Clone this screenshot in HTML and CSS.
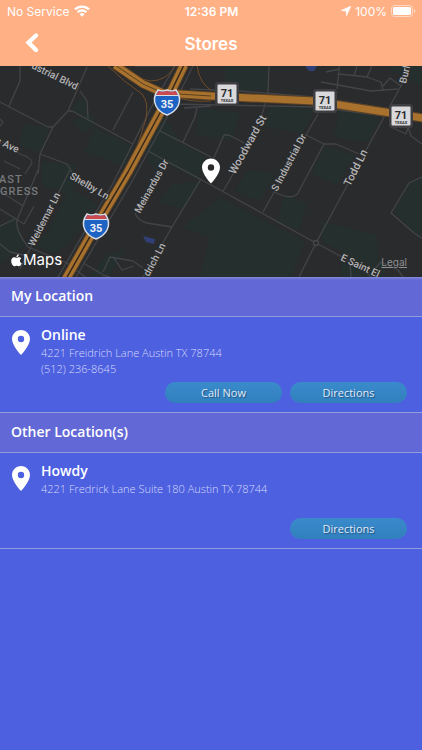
FILE: index.html
```html
<!DOCTYPE html>
<html lang="en">
<head>
    <meta charset="UTF-8">
    <meta name="viewport" content="width=device-width, initial-scale=1.0">
    <title>Stores</title>
    <link rel="stylesheet" href="styles.css">
</head>
<body>
    <header class="header">
        <div class="status-bar">
            <div class="status-left">
                <span>No Service</span>
                <svg width="16" height="12" viewBox="0 0 16 12" fill="none" stroke="#fff" stroke-width="2.3">
                    <path d="M1 4.400a10 10 0 0 1 14 0"/>
                    <path d="M3.600 7.300a6.300 6.300 0 0 1 8.800 0"/>
                    <path d="M8 11.800 5.500 9.200a3.600 3.600 0 0 1 5 0z" fill="#fff" stroke="none"/>
                </svg>
            </div>
            <div class="status-time">12:36 PM</div>
            <div class="status-right">
                <svg width="10" height="10" viewBox="0 0 10 10"><path d="M10 0 0 4.500l5 .5.500 5z" fill="#fff" stroke="#fff" stroke-width=".5"/></svg>
                <span>100%</span>
                <svg width="25" height="12" viewBox="0 0 25 12">
                    <rect x=".5" y=".5" width="21" height="11" rx="3" fill="none" stroke="#fff" stroke-opacity=".5"/>
                    <rect x="2" y="2" width="18" height="8" rx="1.5" fill="#fff"/>
                    <path d="M23 4v4c2-.8 2-3.200 0-4z" fill="#fff" fill-opacity=".5"/>
                </svg>
            </div>
        </div>
        <div class="nav-bar">
            <button class="back" type="button" aria-label="Back">
                <svg width="14" height="20" viewBox="0 0 14 20"><path d="M11 2.500 3.500 9.500l7.500 7.500" fill="none" stroke="#fff" stroke-width="4.300" stroke-linecap="round"/></svg>
            </button>
            <h1>Stores</h1>
        </div>
    </header>

    <div class="map">
        <svg class="map-canvas" viewBox="0 0 422 211">
            <defs>
                <g id="interstate">
                    <path d="M-9-12q4 2 9 0q5 2 9 0q6 8 2 16q-3 6-11 9q-8-3-11-9q-4-8 2-16z" fill="#1d63c4" stroke="#d9dde5" stroke-width="1.500"/>
                    <path d="M-8.500-11.300q4 2 8.500 0q4.500 2 8.500 0l2.200 4.300h-21.400z" fill="#c94b50"/>
                    <path d="M-11-6.500h22" stroke="#d9dde5"/>
                    <text class="shield-35" x="0" y="6">35</text>
                </g>
                <g id="texas">
                    <rect x="-12" y="-12" width="24" height="24" rx="3" fill="#3e3e42"/>
                    <rect x="-9.500" y="-9.500" width="19" height="19" rx="1" fill="#d9d9db"/>
                    <text class="shield-71" x="0" y="3">71</text>
                    <text class="shield-state" x="0" y="8">TEXAS</text>
                </g>
            </defs>

            <rect width="422" height="211" fill="#2a2b2d"/>

            <!-- blocks -->
            <g fill="#242f2e">
                <path d="M68 45 84 30l6 22zM24 58l25 4-8 25-22-8zM72 55l18-7 6 10-14 9zM95 62l38 18-8 20-40-14z"/>
                <path d="M42 96l34 2-4 30-30-8zM140 75l20-30 20 30-26 30zM165 70l40 20-8 24-40-22zM200 42l40 5-8 28-36-7z"/>
                <path d="M225 0h42v24h-42zM270 40l45 3-12 25-40-8zM340 42l40 10-12 24-34-5zM325 81l30 8-18 30-26-12z"/>
                <path d="M247 104l28 4-15 27-25-10zM285 128l22 10-8 26-22-9zM220 132l85 43-14 36h-91l10-40-28-10z"/>
                <path d="M321 155l55 14 4 34-58-27zM394 145l16-27 12-6v58l-10-4zM173 118l28-2-18 27-24-7zM70 122l28 17-25 32-25-8z"/>
                <path d="M0 160l15-10 10 30-25 18zM52 160l22 12-20 16-18-8zM106 190l20-8-18 29h-18zM345 177l40 20v14h-45zM386 0h36v20z"/>
            </g>
            <path d="M143 170l12 3-1 5-8-2zM305 0h12l-3 5h-5z" fill="#303f75"/>

            <!-- minor streets -->
            <g fill="none" stroke="#434447" stroke-width="1.300" stroke-linejoin="round">
                <path d="M20 0v15L9 40M0 36l48 25h5l15-16h4l61 33M87 1 68 45M80 25l7 10 1 17M133 26l-20 38"/>
                <path d="M53 61 40 88l-2 20M40 88l27 10 5 8M0 74l20 14q12 4 12 9l-7 11M0 60l3-4-3-3M4 95l16 8"/>
                <path d="M197 41l-2 10-12 25M184 42l27-2M160 65l51 26M148 85l63 34 105 58 28 15 28 19M0 143l24 15 10-18"/>
                <path d="M70 104 28 187l-8 16M38 104 17 154q-2 10 11 27l39 16 18 14M0 160l15-7M0 178l10 8 18 4M0 125l23 15"/>
                <path d="M165 95l-4 10M201 113l-29 48-29 50M135 147q3 8 12 10l25 4M212 96l12-27h5l15 8M269 0l-1 25q-5 35-45 100"/>
                <path d="M318 48l-12 21 18 9h12l23 10M324 78l-26 49q-5 8-24-1M306 69l-43 77M401 20 384 51 316 177l-17 34"/>
                <path d="M321 16l50 9 27-2M326 6l13-3V0M339 8l28 3 14 5 2 8M383 20l7-8 11 8 10-20M339 3l-2 20M354 10l3-10M367 11l5-11"/>
                <path d="M391 61l15 7 2-7 3 9 11 8M422 111l-13 6-18 30 23 20 8 5M374 204l7-8 17 8 5 7M350 196l1 15"/>
                <path d="M83 197l19 11M103 206l7-15 23 4 10 7M114 192l8 12 12-4M102 209l8 2"/>
                <path d="M135 0h45M190 23l50 2 74 6 108 17M170 38l148 3 66 9M175 0l-21 36-42 83-54 92M193 0l-22 44-40 73-55 94"/>
            </g>
            <circle cx="316" cy="177" r="2.500" fill="#2a2b2d" stroke="#47484b" stroke-width="1.300"/>

            <!-- ramps -->
            <g fill="none" stroke="#704b26" stroke-width="1">
                <path d="M108 0q16 16 34 28 7 8 4 25l-9 28-70 130M120 0q14 12 30 15 17 0 25-15M197 0q3 18 14 24M165 28q24 9 46 7"/>
            </g>

            <!-- highways -->
            <g fill="none" stroke-linejoin="round">
                <path d="M115-1l28 19 20 9 48 3 103 5 77 12 32 5" stroke="#5c4224" stroke-width="9"/>
                <path d="M115-1l28 19 20 9 48 3 103 5 77 12 32 5" stroke="#a8722e" stroke-width="7"/>
                <path d="M115-1l28 19 20 9 48 3" stroke="#59411f" stroke-width="1"/>
                <path d="M184-1l-17 35-39 72-32 54-30 53" stroke="#5c4224" stroke-width="10"/>
                <path d="M184-1l-17 35-39 72-32 54-30 53" stroke="#a8722e" stroke-width="8"/>
                <path d="M184-1l-17 35-39 72-32 54-30 53" stroke="#36291b" stroke-width="1.500"/>
            </g>

            <g class="street">
                <text transform="translate(31 2) rotate(26)">ustrial Blvd</text>
                <text transform="translate(-5 77) rotate(24)">s Ave</text>
                <text transform="translate(69 112) rotate(30)">Shelby Ln</text>
                <text transform="translate(34 181) rotate(-63)">Weidemar Ln</text>
                <text transform="translate(140 148) rotate(-61)">Meinardus Dr</text>
                <text transform="translate(149 211) rotate(-62)">drich Ln</text>
                <text transform="translate(277 126) rotate(-62)">S Industrial Dr</text>
                <text transform="translate(406 18) rotate(-77)">Burl</text>
                <text class="major" transform="translate(235 109) rotate(-61)">Woodward St</text>
                <text class="major" transform="translate(350 121) rotate(-63)">Todd Ln</text>
                <text transform="translate(340 194) rotate(25)">E Saint El</text>
            </g>
            <g class="district">
                <text x="-1" y="117">AST</text>
                <text x="0" y="129">GRESS</text>
            </g>

            <use href="#interstate" x="167" y="36"/>
            <use href="#interstate" x="96" y="160"/>
            <use href="#texas" x="227" y="28"/>
            <use href="#texas" x="325" y="35"/>
            <use href="#texas" x="401" y="50"/>

            <path d="M211 92.500c-5 0-9 4-9 9 0 6.500 9 16 9 16s9-9.500 9-16c0-5-4-9-9-9zm0 12.200a3.200 3.200 0 1 1 0-6.400 3.200 3.200 0 0 1 0 6.400z" fill="#fff"/>
        </svg>
        <div class="map-brand">
            <svg width="11" height="13" viewBox="0 0 11 13" fill="#fff">
                <path d="M7.800.2c.1 1.500-1 2.900-2.400 2.900C5.200 1.700 6.400.4 7.800.2z"/>
                <path d="M5.600 3.800c.6 0 1.300-.6 2.300-.6 1 0 1.900.5 2.400 1.300-2 1.200-1.700 3.900.4 4.700-.6 1.600-1.600 3.100-2.800 3.100-.9 0-1.200-.5-2.200-.5s-1.400.5-2.200.5C1.900 12.300.2 9.600.2 7c0-2.400 1.500-3.800 3-3.800 1 0 1.800.6 2.400.6z"/>
            </svg>
            <span>Maps</span>
        </div>
        <a class="map-legal" href="#">Legal</a>
    </div>

    <main>
        <section>
            <h2>My Location</h2>
            <article class="store">
                <svg class="pin" width="18" height="25" viewBox="0 0 18 25"><path d="M9 0C4 0 0 4 0 9c0 6.700 9 16 9 16s9-9.300 9-16c0-5-4-9-9-9zm0 12.200a3.200 3.200 0 1 1 0-6.400 3.200 3.200 0 0 1 0 6.400z" fill="#fff"/></svg>
                <div class="store-info">
                    <h3>Online</h3>
                    <p>4221 Freidrich Lane Austin TX 78744</p>
                    <p>(512) 236-8645</p>
                </div>
                <div class="actions">
                    <button type="button">Call Now</button>
                    <button type="button">Directions</button>
                </div>
            </article>
        </section>
        <section>
            <h2>Other Location(s)</h2>
            <article class="store">
                <svg class="pin" width="18" height="25" viewBox="0 0 18 25"><path d="M9 0C4 0 0 4 0 9c0 6.700 9 16 9 16s9-9.300 9-16c0-5-4-9-9-9zm0 12.200a3.200 3.200 0 1 1 0-6.400 3.200 3.200 0 0 1 0 6.400z" fill="#fff"/></svg>
                <div class="store-info">
                    <h3>Howdy</h3>
                    <p>4221 Fredrick Lane Suite 180 Austin TX 78744</p>
                </div>
                <div class="actions">
                    <button type="button">Directions</button>
                </div>
            </article>
        </section>
    </main>
</body>
</html>
```

FILE: styles.css
```css
*{
    box-sizing: border-box;
}
body{
    margin: 0;
    min-height: 100vh;
    background-color: #4d60e0;
    color: #fff;
    font-family: "Open Sans", "Noto Sans", sans-serif;
}
h1,h2,h3,p{
    margin: 0;
}
svg{
    display: block;
    flex-shrink: 0;
}

/* header */
.header{
    background-color: #ffb085;
    font-family: Inter, Roboto, sans-serif;
}
.status-bar{
    display: grid;
    grid-template-columns: 1fr auto 1fr;
    align-items: center;
    height: 22px;
    padding: 0 6px 0 7px;
    font-size: 12px;
}
.status-left,.status-right{
    display: flex;
    align-items: center;
    gap: 4px;
}
.status-right{
    justify-content: flex-end;
}
.status-time{
    font-weight: 600;
}
.nav-bar{
    display: grid;
    grid-template-columns: 64px 1fr 64px;
    align-items: center;
    height: 44px;
}
.nav-bar h1{
    font-size: 17px;
    font-weight: 600;
    text-align: center;
}
.back{
    display: flex;
    justify-content: center;
    padding: 10px 0 12px;
    border: 0;
    background: none;
}

/* map */
.map{
    position: relative;
}
.map-canvas{
    width: 100%;
    height: auto;
    overflow: hidden;
    font-family: Roboto, sans-serif;
}
.street{
    fill: #b4b4b6;
    font-size: 10px;
    font-weight: 500;
    stroke: #2a2b2d;
    stroke-width: 2px;
    paint-order: stroke;
}
.major{
    font-size: 11px;
}
.district{
    fill: #77797c;
    font-size: 11px;
    font-weight: 500;
    letter-spacing: 1px;
}
.shield-35,.shield-71,.shield-state{
    text-anchor: middle;
    font-weight: 700;
}
.shield-35{
    fill: #f0f2f6;
    font-size: 11px;
}
.shield-71{
    fill: #2a2b2d;
    font-size: 11px;
}
.shield-state{
    fill: #2a2b2d;
    font-size: 4px;
}
.map-brand{
    position: absolute;
    left: 11px;
    bottom: 7px;
    display: flex;
    align-items: center;
    gap: 1px;
    font-family: Inter, Roboto, sans-serif;
    font-size: 15px;
    line-height: 20px;
}
.map-legal{
    position: absolute;
    right: 15px;
    bottom: 9px;
    color: #8e8f91;
    font-family: Inter, Roboto, sans-serif;
    font-size: 10px;
    line-height: 12px;
}

/* stores */
h2{
    height: 40px;
    padding-left: 11px;
    border-bottom: 1px solid #969bde;
    background-color: #6269d6;
    font-size: 14px;
    font-weight: 600;
    line-height: 38px;
}
section:first-child h2{
    box-shadow: inset 0 3px 3px -2px #9195dc;
}
.store{
    display: grid;
    grid-template-columns: 18px 1fr;
    grid-template-rows: 1fr auto;
    column-gap: 11px;
    min-height: 96px;
    padding: 8px 15px 9px 12px;
    border-bottom: 1px solid #969bde;
}
.pin{
    margin-top: 5px;
}
.store h3{
    font-size: 14px;
    font-weight: 600;
    line-height: 20px;
}
.store p{
    color: #d5dafb;
    font-size: 11px;
    font-weight: 300;
    line-height: 16px;
}
.actions{
    grid-column: 1 / -1;
    display: flex;
    justify-content: flex-end;
    gap: 8px;
}
.actions button{
    width: 117px;
    height: 21px;
    padding: 0;
    border: 0;
    border-radius: 11px;
    background: linear-gradient(#3a8bcc, #3180bd);
    color: #e2ecf8;
    font-family: inherit;
    font-size: 11px;
    line-height: 20px;
    text-shadow: 1px 1px 1px #1d4f80;
}
```
